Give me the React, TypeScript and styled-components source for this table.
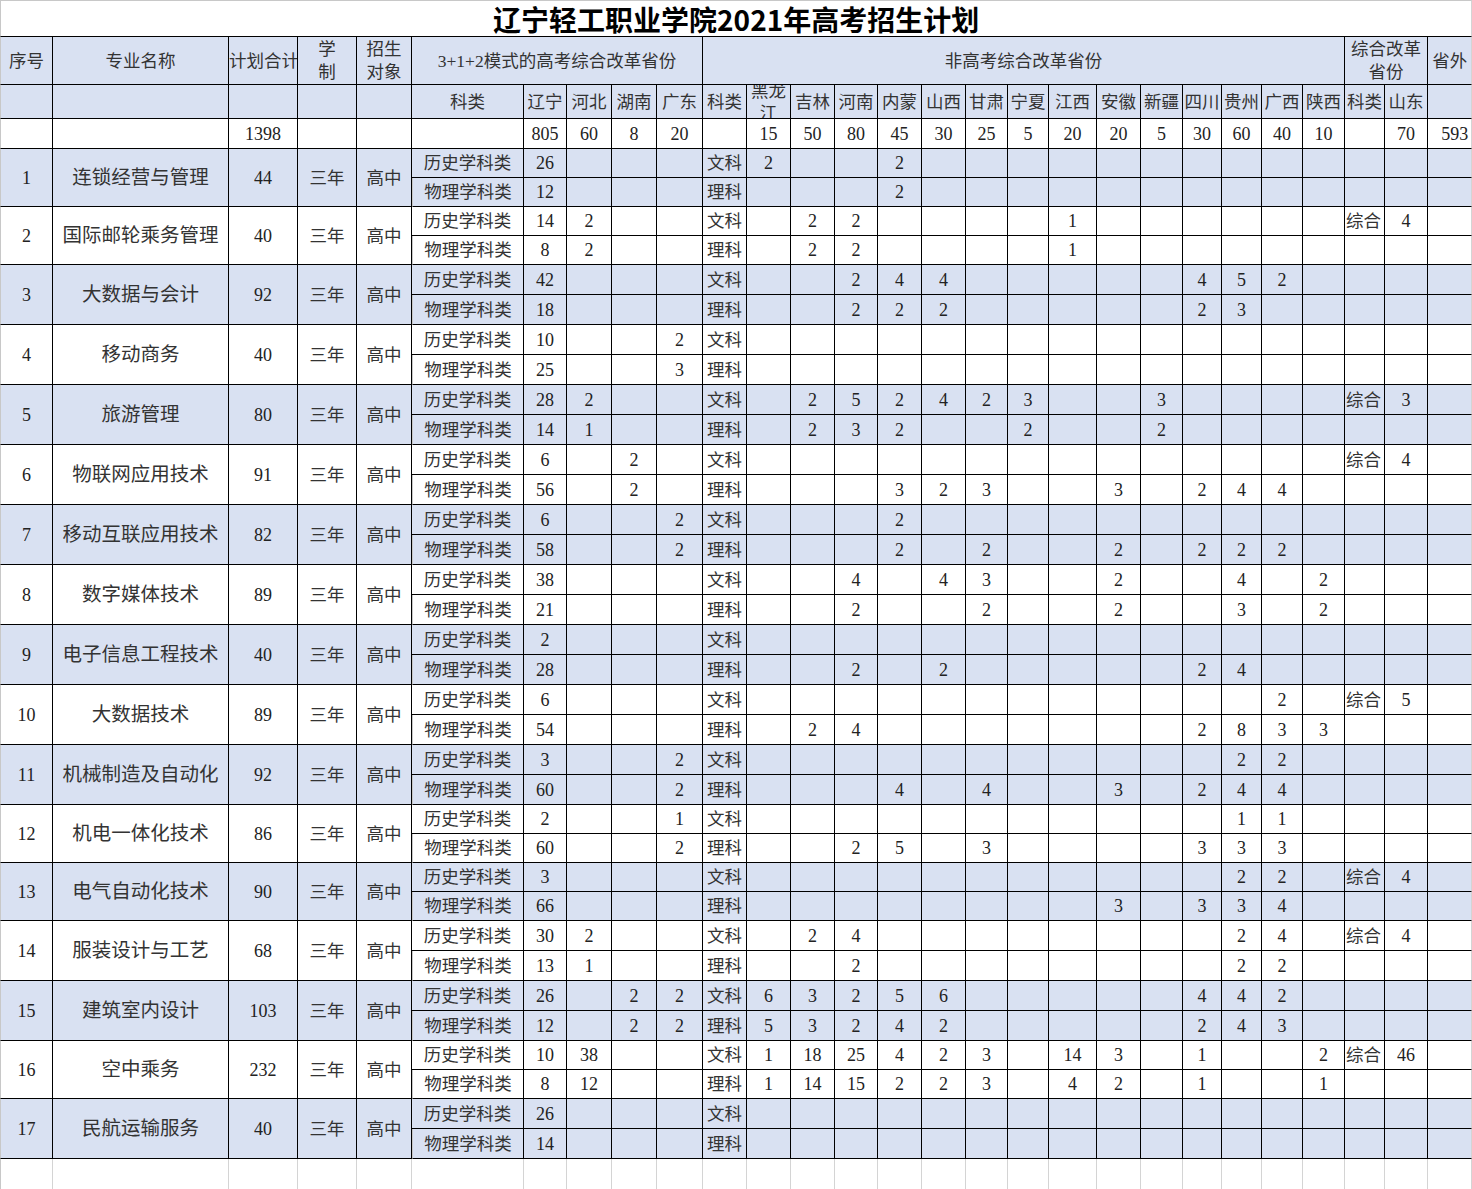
import React from 'react'
import styled, { createGlobalStyle } from 'styled-components'

const GlobalStyle = createGlobalStyle`
  html, body {
    margin: 0;
    padding: 0;
    background: #fff;
  }
  body {
    font-family: "Liberation Serif", "Noto Sans CJK SC", serif;
  }
`

const BLUE = '#d9e1f2'
const GRID = '#d4d4d4'

const COL_WIDTHS = [53, 176, 69, 59, 55, 112, 43, 45, 45, 46, 44, 44, 44, 43, 44, 44, 42, 41, 48, 44, 42, 39, 40, 41, 42, 40, 43, 44]

const REFORM: [string, string, string][] = [
  ['LN', '辽宁', '805'],
  ['HB', '河北', '60'],
  ['HuN', '湖南', '8'],
  ['GD', '广东', '20'],
]

const NON_REFORM: [string, string, string][] = [
  ['HLJ', '黑龙江', '15'],
  ['JL', '吉林', '50'],
  ['HeN', '河南', '80'],
  ['NM', '内蒙', '45'],
  ['SX', '山西', '30'],
  ['GS', '甘肃', '25'],
  ['NX', '宁夏', '5'],
  ['JX', '江西', '20'],
  ['AH', '安徽', '20'],
  ['XJ', '新疆', '5'],
  ['SC', '四川', '30'],
  ['GZ', '贵州', '60'],
  ['GX', '广西', '40'],
  ['ShX', '陕西', '10'],
]

type Plan = Record<string, number>

interface Major {
  no: number
  name: string
  total: number
  h: number
  hist: Plan
  phys: Plan
}

const MAJORS: Major[] = [
  { no: 1, name: '连锁经营与管理', total: 44, h: 29, hist: { LN: 26, HLJ: 2, NM: 2 }, phys: { LN: 12, NM: 2 } },
  { no: 2, name: '国际邮轮乘务管理', total: 40, h: 29, hist: { LN: 14, HB: 2, JL: 2, HeN: 2, JX: 1, SD: 4 }, phys: { LN: 8, HB: 2, JL: 2, HeN: 2, JX: 1 } },
  { no: 3, name: '大数据与会计', total: 92, h: 30, hist: { LN: 42, HeN: 2, NM: 4, SX: 4, SC: 4, GZ: 5, GX: 2 }, phys: { LN: 18, HeN: 2, NM: 2, SX: 2, SC: 2, GZ: 3 } },
  { no: 4, name: '移动商务', total: 40, h: 30, hist: { LN: 10, GD: 2 }, phys: { LN: 25, GD: 3 } },
  { no: 5, name: '旅游管理', total: 80, h: 30, hist: { LN: 28, HB: 2, JL: 2, HeN: 5, NM: 2, SX: 4, GS: 2, NX: 3, XJ: 3, SD: 3 }, phys: { LN: 14, HB: 1, JL: 2, HeN: 3, NM: 2, NX: 2, XJ: 2 } },
  { no: 6, name: '物联网应用技术', total: 91, h: 30, hist: { LN: 6, HuN: 2, SD: 4 }, phys: { LN: 56, HuN: 2, NM: 3, SX: 2, GS: 3, AH: 3, SC: 2, GZ: 4, GX: 4 } },
  { no: 7, name: '移动互联应用技术', total: 82, h: 30, hist: { LN: 6, GD: 2, NM: 2 }, phys: { LN: 58, GD: 2, NM: 2, GS: 2, AH: 2, SC: 2, GZ: 2, GX: 2 } },
  { no: 8, name: '数字媒体技术', total: 89, h: 30, hist: { LN: 38, HeN: 4, SX: 4, GS: 3, AH: 2, GZ: 4, ShX: 2 }, phys: { LN: 21, HeN: 2, GS: 2, AH: 2, GZ: 3, ShX: 2 } },
  { no: 9, name: '电子信息工程技术', total: 40, h: 30, hist: { LN: 2 }, phys: { LN: 28, HeN: 2, SX: 2, SC: 2, GZ: 4 } },
  { no: 10, name: '大数据技术', total: 89, h: 30, hist: { LN: 6, GX: 2, SD: 5 }, phys: { LN: 54, JL: 2, HeN: 4, SC: 2, GZ: 8, GX: 3, ShX: 3 } },
  { no: 11, name: '机械制造及自动化', total: 92, h: 30, hist: { LN: 3, GD: 2, GZ: 2, GX: 2 }, phys: { LN: 60, GD: 2, NM: 4, GS: 4, AH: 3, SC: 2, GZ: 4, GX: 4 } },
  { no: 12, name: '机电一体化技术', total: 86, h: 29, hist: { LN: 2, GD: 1, GZ: 1, GX: 1 }, phys: { LN: 60, GD: 2, HeN: 2, NM: 5, GS: 3, SC: 3, GZ: 3, GX: 3 } },
  { no: 13, name: '电气自动化技术', total: 90, h: 29, hist: { LN: 3, GZ: 2, GX: 2, SD: 4 }, phys: { LN: 66, AH: 3, SC: 3, GZ: 3, GX: 4 } },
  { no: 14, name: '服装设计与工艺', total: 68, h: 30, hist: { LN: 30, HB: 2, JL: 2, HeN: 4, GZ: 2, GX: 4, SD: 4 }, phys: { LN: 13, HB: 1, HeN: 2, GZ: 2, GX: 2 } },
  { no: 15, name: '建筑室内设计', total: 103, h: 30, hist: { LN: 26, HuN: 2, GD: 2, HLJ: 6, JL: 3, HeN: 2, NM: 5, SX: 6, SC: 4, GZ: 4, GX: 2 }, phys: { LN: 12, HuN: 2, GD: 2, HLJ: 5, JL: 3, HeN: 2, NM: 4, SX: 2, SC: 2, GZ: 4, GX: 3 } },
  { no: 16, name: '空中乘务', total: 232, h: 29, hist: { LN: 10, HB: 38, HLJ: 1, JL: 18, HeN: 25, NM: 4, SX: 2, GS: 3, JX: 14, AH: 3, SC: 1, ShX: 2, SD: 46 }, phys: { LN: 8, HB: 12, HLJ: 1, JL: 14, HeN: 15, NM: 2, SX: 2, GS: 3, JX: 4, AH: 2, SC: 1, ShX: 1 } },
  { no: 17, name: '民航运输服务', total: 40, h: 30, hist: { LN: 26 }, phys: { LN: 14 } },
]

const Sheet = styled.table`
  width: 1472px;
  table-layout: fixed;
  border-collapse: separate;
  border-spacing: 0;
  color: #333;
`

const Cell = styled.td<{ $blue?: boolean; $h?: number; $edge?: boolean }>`
  box-sizing: border-box;
  height: ${({ $h }) => ($h ? `${$h}px` : 'auto')};
  padding: 0;
  background: ${({ $blue }) => ($blue ? BLUE : '#fff')};
  border-right: 1px solid ${({ $edge }) => ($edge ? GRID : '#000')};
  border-bottom: 1px solid #000;
  text-align: center;
  vertical-align: middle;
  font-size: 17.5px;
  line-height: 22px;
  white-space: nowrap;
  overflow: hidden;

  &:first-child {
    border-left: 1px solid #c8c8c8;
  }
`

const NumCell = styled(Cell)`
  font-size: 18px;
  color: #222;
`

const NameCell = styled(Cell)`
  font-size: 19.5px;
`

const MixCell = styled(Cell)`
  text-align: left;
  padding-left: 1px;
`

const WrapCell = styled(Cell)`
  line-height: 23px;
`

const BlankCell = styled(Cell)`
  border-right-color: ${GRID};
  border-bottom-color: ${GRID};
`

const TitleCell = styled.td`
  box-sizing: border-box;
  height: 37px;
  padding: 0;
  border-top: 1px solid #c8c8c8;
  border-left: 1px solid #c8c8c8;
  border-right: 1px solid ${GRID};
  border-bottom: 1px solid #000;
  text-align: center;
  vertical-align: middle;
  font-family: "Noto Sans CJK SC", sans-serif;
  font-weight: 700;
  font-size: 28px;
  line-height: 34px;
  color: #000;
`

const Clipped = styled.div`
  height: 33px;
  overflow: hidden;
  display: flex;
  flex-direction: column;
  justify-content: center;
  line-height: 22px;
`

const show = (v?: number) => (v === undefined ? '' : v)

const SubRow: React.FC<{ major: Major; kind: 'hist' | 'phys'; lead?: React.ReactNode }> = ({ major, kind, lead }) => {
  const plan = major[kind]
  const blue = major.no % 2 === 1
  const h = major.h
  return (
    <tr>
      {lead}
      <Cell $blue={blue} $h={h}>{kind === 'hist' ? '历史学科类' : '物理学科类'}</Cell>
      {REFORM.map(([key]) => (
        <NumCell key={key} $blue={blue} $h={h}>{show(plan[key])}</NumCell>
      ))}
      <Cell $blue={blue} $h={h}>{kind === 'hist' ? '文科' : '理科'}</Cell>
      {NON_REFORM.map(([key]) => (
        <NumCell key={key} $blue={blue} $h={h}>{show(plan[key])}</NumCell>
      ))}
      <MixCell $blue={blue} $h={h}>{plan.SD !== undefined ? '综合' : ''}</MixCell>
      <NumCell $blue={blue} $h={h}>{show(plan.SD)}</NumCell>
      <Cell $blue={blue} $h={h} $edge />
    </tr>
  )
}

const MajorRows: React.FC<{ major: Major }> = ({ major }) => {
  const blue = major.no % 2 === 1
  const lead = (
    <>
      <NumCell rowSpan={2} $blue={blue}>{major.no}</NumCell>
      <NameCell rowSpan={2} $blue={blue}>{major.name}</NameCell>
      <NumCell rowSpan={2} $blue={blue}>{major.total}</NumCell>
      <Cell rowSpan={2} $blue={blue}>三年</Cell>
      <Cell rowSpan={2} $blue={blue}>高中</Cell>
    </>
  )
  return (
    <>
      <SubRow major={major} kind="hist" lead={lead} />
      <SubRow major={major} kind="phys" />
    </>
  )
}

const App: React.FC = () => {
  return (
    <>
      <GlobalStyle />
      <Sheet>
        <colgroup>
          {COL_WIDTHS.map((w, i) => (
            <col key={i} style={{ width: w }} />
          ))}
        </colgroup>
        <tbody>
          <tr>
            <TitleCell colSpan={28}>辽宁轻工职业学院2021年高考招生计划</TitleCell>
          </tr>

          {/* header: groups */}
          <tr>
            <Cell $blue $h={48}>序号</Cell>
            <Cell $blue $h={48}>专业名称</Cell>
            <Cell $blue $h={48}>计划合计</Cell>
            <WrapCell $blue $h={48}>学<br />制</WrapCell>
            <WrapCell $blue $h={48}>招生<br />对象</WrapCell>
            <Cell $blue $h={48} colSpan={5}>3+1+2模式的高考综合改革省份</Cell>
            <Cell $blue $h={48} colSpan={15}>非高考综合改革省份</Cell>
            <WrapCell $blue $h={48} colSpan={2}>综合改革<br />省份</WrapCell>
            <Cell $blue $h={48} $edge>省外</Cell>
          </tr>

          {/* header: provinces */}
          <tr>
            {[0, 1, 2, 3, 4].map((i) => (
              <Cell key={i} $blue $h={34} />
            ))}
            <Cell $blue $h={34}>科类</Cell>
            {REFORM.map(([key, label]) => (
              <Cell key={key} $blue $h={34}>{label}</Cell>
            ))}
            <Cell $blue $h={34}>科类</Cell>
            {NON_REFORM.map(([key, label]) => (
              <Cell key={key} $blue $h={34}>
                {key === 'HLJ' ? (
                  <Clipped>
                    <span>黑龙</span>
                    <span>江</span>
                  </Clipped>
                ) : (
                  label
                )}
              </Cell>
            ))}
            <Cell $blue $h={34}>科类</Cell>
            <Cell $blue $h={34}>山东</Cell>
            <Cell $blue $h={34} $edge />
          </tr>

          {/* totals */}
          <tr>
            <Cell $h={30} />
            <Cell $h={30} />
            <NumCell $h={30}>1398</NumCell>
            <Cell $h={30} />
            <Cell $h={30} />
            <Cell $h={30} />
            {REFORM.map(([key, , total]) => (
              <NumCell key={key} $h={30}>{total}</NumCell>
            ))}
            <Cell $h={30} />
            {NON_REFORM.map(([key, , total]) => (
              <NumCell key={key} $h={30}>{total}</NumCell>
            ))}
            <Cell $h={30} />
            <NumCell $h={30}>70</NumCell>
            <NumCell $h={30} $edge style={{ textAlign: 'right', paddingRight: 3 }}>593</NumCell>
          </tr>

          {MAJORS.map((m) => (
            <MajorRows key={m.no} major={m} />
          ))}

          <tr>
            {COL_WIDTHS.map((_, i) => (
              <BlankCell key={i} $h={31} />
            ))}
          </tr>
        </tbody>
      </Sheet>
    </>
  )
}

export default App
